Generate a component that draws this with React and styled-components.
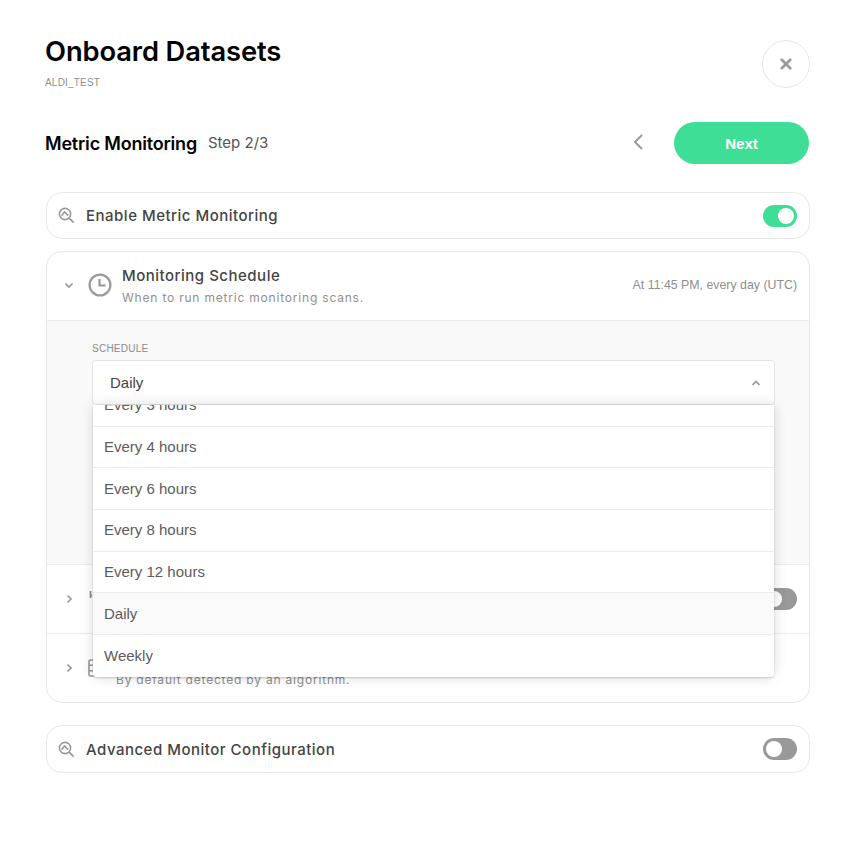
import React from "react";
import styled, { createGlobalStyle } from "styled-components";

const Global = createGlobalStyle`
  html, body { margin: 0; padding: 0; background: #fff; }
  body { font-family: Inter, "Liberation Sans", sans-serif; color: #000; }
`;
const HELV = `"Liberation Sans", Arial, sans-serif`;
const Page = styled.div`
  width: 854px; height: 844px; box-sizing: border-box; overflow: hidden;
  padding: 40px 44px 0 46px;
`;
const Header = styled.header`
  display: flex; justify-content: space-between; align-items: flex-start; height: 48px;
`;
const TitleBlock = styled.div`display: flex; flex-direction: column; margin-left: -1px;`;
const Title = styled.h1`
  margin: -4px 0 0; font-size: 27.3px; line-height: 32px; font-weight: 600; letter-spacing: -0.1px; color: #000;
`;
const Sub = styled.div`
  margin-top: 9px; font-size: 10px; line-height: 12px; font-weight: 400; color: #8f8f8f; font-family: ${HELV}; letter-spacing: 0.2px;
`;
const Close = styled.button`
  width: 48px; height: 48px; border-radius: 50%; border: 1px solid #e6e6e6; background: #fff; padding: 0;
  display: flex; align-items: center; justify-content: center;
`;
const StepBar = styled.div`
  display: flex; align-items: center; margin-top: 34px; height: 42px;
`;
const StepTitle = styled.h2`
  margin: 1px 0 0 -1px; font-size: 18px; font-weight: 600; letter-spacing: -0.2px; line-height: 42px; color: #000;
`;
const StepCount = styled.span`
  margin-left: 11px; font-size: 15px; color: #555; margin-top: -2px;
`;
const Spacer = styled.div`flex: 1;`;
const Back = styled.div`
  display: flex; width: 14px; margin-right: 29px; margin-top: -2px; justify-content: center;
`;
const Next = styled.button`
  width: 135px; height: 42px; border: 0; border-radius: 21px; background: #3ede96; color: #fff;
  font: 700 15px ${HELV}; margin-right: 1px;
`;
const SimpleCard = styled.section`
  box-sizing: border-box; height: ${p => p.$h}px; margin-top: ${p => p.$mt}px;
  border: 1px solid #e8e8e8; border-radius: 16px; display: flex; align-items: center; padding: 0 12px 0 11px;
`;
const Label = styled.span`
  margin-left: 11px; font-size: 15px; font-weight: 500; letter-spacing: 0.5px; color: #444; flex: 1;
`;
const Toggle = styled.div`
  width: 34px; height: 22px; border-radius: 11px; background: ${p => (p.$on ? "#3ede96" : "#999")};
  position: relative; flex: none;
  &::after {
    content: ""; position: absolute; top: 3px; width: 16px; height: 16px; border-radius: 50%; background: #fff;
    left: ${p => (p.$on ? "15px" : "3px")};
  }
`;
const Card = styled.section`
  box-sizing: border-box; height: 452px; margin-top: 12px; border: 1px solid #e8e8e8; border-radius: 16px;
  display: flex; flex-direction: column;
`;
const Row = styled.div`
  box-sizing: border-box; height: ${p => p.$h}px; display: flex; align-items: center; padding: 0 12px 0 16px; flex: none;
  border-top: ${p => (p.$top ? "1px solid #ebebeb" : "0")};
`;
const IconSlot = styled.div`
  display: flex; width: 12px; margin: ${p => (p.$up ? "-2px" : "0")} 13px 0 0; justify-content: center; flex: none;
`;
const ClockSlot = styled.div`display: flex; margin-top: -2px; flex: none;`;
const SmallSlot = styled.div`display: flex; flex: none;`;
const RowText = styled.div`
  margin-left: 10px; flex: 1; display: flex; flex-direction: column; padding-bottom: 1px;
`;
const RowTitle = styled.div`
  min-height: 20px; font-size: 15px; line-height: 20px; font-weight: 500; letter-spacing: 0.5px; color: #444;
`;
const RowDesc = styled.div`
  font-size: 12px; line-height: 16px; margin-top: 4px; letter-spacing: 0.8px; color: #8f8f8f;
`;
const RowMeta = styled.div`
  font: 12.35px ${HELV}; color: #8f8f8f; margin-top: -2px;
`;
const Body = styled.div`
  box-sizing: border-box; height: 245px; background: #f9f9f9; border-top: 1px solid #ebebeb; border-bottom: 1px solid #ebebeb;
  padding: 22px 34px 0 45px; flex: none;
`;
const FieldLabel = styled.div`
  font: 10px/12px ${HELV}; letter-spacing: 0.25px; color: #8c8c8c; margin-bottom: 5px;
`;
const SelectWrap = styled.div`position: relative;`;
const Select = styled.div`
  box-sizing: border-box; height: 45px; background: #fff; border: 1px solid #e3e3e3; border-radius: 4px;
  display: flex; align-items: center; justify-content: space-between; padding: 0 12px 0 17px;
  font: 15px ${HELV}; color: #444;
`;
const Menu = styled.div`
  position: absolute; left: 1px; right: 1px; top: 45px; height: 272px; overflow: hidden; background: #fff;
  border-radius: 0 0 4px 4px; box-shadow: 0 1px 2px rgba(0,0,0,.18), 0 0 14px rgba(0,0,0,.14); z-index: 2;
`;
const MenuList = styled.ul`
  list-style: none; margin: -20px 0 0; padding: 0;
`;
const Option = styled.li`
  box-sizing: border-box; height: 41.7px; display: flex; align-items: center; padding: 0 11px 1px;
  font: 15px ${HELV}; color: #5c5c5c;
  border-bottom: 1px solid #ececec;
  background: ${p => (p.$active ? "#fafafa" : "#fff")};
  &:last-child { border-bottom: 0; }
`;

const ZoomIcon = () => (
  <svg width="17" height="17" viewBox="0 0 17 17" fill="none" stroke="#999" strokeWidth="1.6">
    <circle cx="7" cy="7" r="5.6" />
    <path d="M11.2 11.2 15.6 15.6" strokeWidth="1.8" />
    <path d="M3.6 8.8 6.6 5 10.2 8.6" strokeWidth="1.6" />
  </svg>
);
const Chevron = ({ d, c = "#999", s = 1.7 }) => (
  <svg width="12" height="12" viewBox="0 0 12 12" fill="none" stroke={c} strokeWidth={s}>
    <path d={d} />
  </svg>
);
const ClockIcon = () => (
  <svg width="24" height="24" viewBox="0 0 24 24" fill="none" stroke="#999" strokeWidth="2.2">
    <circle cx="12" cy="12" r="10.4" />
    <path d="M11.5 6v6.5h6" />
  </svg>
);
const MetricIcon = () => (
  <svg width="18" height="18" viewBox="0 0 18 18" fill="none" stroke="#888" strokeWidth="1.6">
    <path d="M2.5 1v7M2 5.5h2M9 3v13M15 6v10" />
  </svg>
);
const TableIcon = () => (
  <svg width="18" height="18" viewBox="0 0 18 18" fill="none" stroke="#999" strokeWidth="1.6">
    <rect x="1" y="1" width="16" height="16" rx="1.5" />
    <path d="M1 6.300h16M1 11.700h16M6 1v16" />
  </svg>
);

const OPTIONS = ["Every 3 hours", "Every 4 hours", "Every 6 hours", "Every 8 hours", "Every 12 hours", "Daily", "Weekly"];

export default function App() {
  return (
    <Page>
      <Global />
      <Header>
        <TitleBlock>
          <Title>Onboard Datasets</Title>
          <Sub>ALDI_TEST</Sub>
        </TitleBlock>
        <Close aria-label="Close">
          <svg width="14" height="14" viewBox="0 0 14 14" stroke="#999" strokeWidth="2.6" fill="none">
            <path d="M2 2 12 12M12 2 2 12" />
          </svg>
        </Close>
      </Header>
      <StepBar>
        <StepTitle>Metric Monitoring</StepTitle>
        <StepCount>Step 2/3</StepCount>
        <Spacer />
        <Back>
          <svg width="10" height="16" viewBox="0 0 10 16" fill="none" stroke="#999" strokeWidth="2">
            <path d="M9 1 2 8l7 7" />
          </svg>
        </Back>
        <Next>Next</Next>
      </StepBar>
      <SimpleCard $h={47} $mt={28}>
        <ZoomIcon />
        <Label>Enable Metric Monitoring</Label>
        <Toggle $on />
      </SimpleCard>
      <Card>
        <Row $h={68}>
          <IconSlot $up><Chevron d="M2.5 4.5 6 8l3.5-3.5" /></IconSlot>
          <ClockSlot><ClockIcon /></ClockSlot>
          <RowText>
            <RowTitle>Monitoring Schedule</RowTitle>
            <RowDesc>When to run metric monitoring scans.</RowDesc>
          </RowText>
          <RowMeta>At 11:45 PM, every day (UTC)</RowMeta>
        </Row>
        <Body>
          <FieldLabel>SCHEDULE</FieldLabel>
          <SelectWrap>
            <Select>
              Daily
              <Chevron d="M2.5 8 6 4.5 9.500 8" />
            </Select>
            <Menu>
              <MenuList>
                {OPTIONS.map(o => (
                  <Option key={o} $active={o === "Daily"}>{o}</Option>
                ))}
              </MenuList>
            </Menu>
          </SelectWrap>
        </Body>
        <Row $h={68}>
          <IconSlot><Chevron d="M4.500 2.500 8 6l-3.500 3.500" /></IconSlot>
          <SmallSlot><MetricIcon /></SmallSlot>
          <Spacer />
          <Toggle />
        </Row>
        <Row $h={69} $top>
          <IconSlot><Chevron d="M4.500 2.500 8 6l-3.500 3.500" /></IconSlot>
          <SmallSlot><TableIcon /></SmallSlot>
          <RowText>
            <RowTitle />
            <RowDesc>By default detected by an algorithm.</RowDesc>
          </RowText>
        </Row>
      </Card>
      <SimpleCard $h={48} $mt={22}>
        <ZoomIcon />
        <Label>Advanced Monitor Configuration</Label>
        <Toggle />
      </SimpleCard>
    </Page>
  );
}
